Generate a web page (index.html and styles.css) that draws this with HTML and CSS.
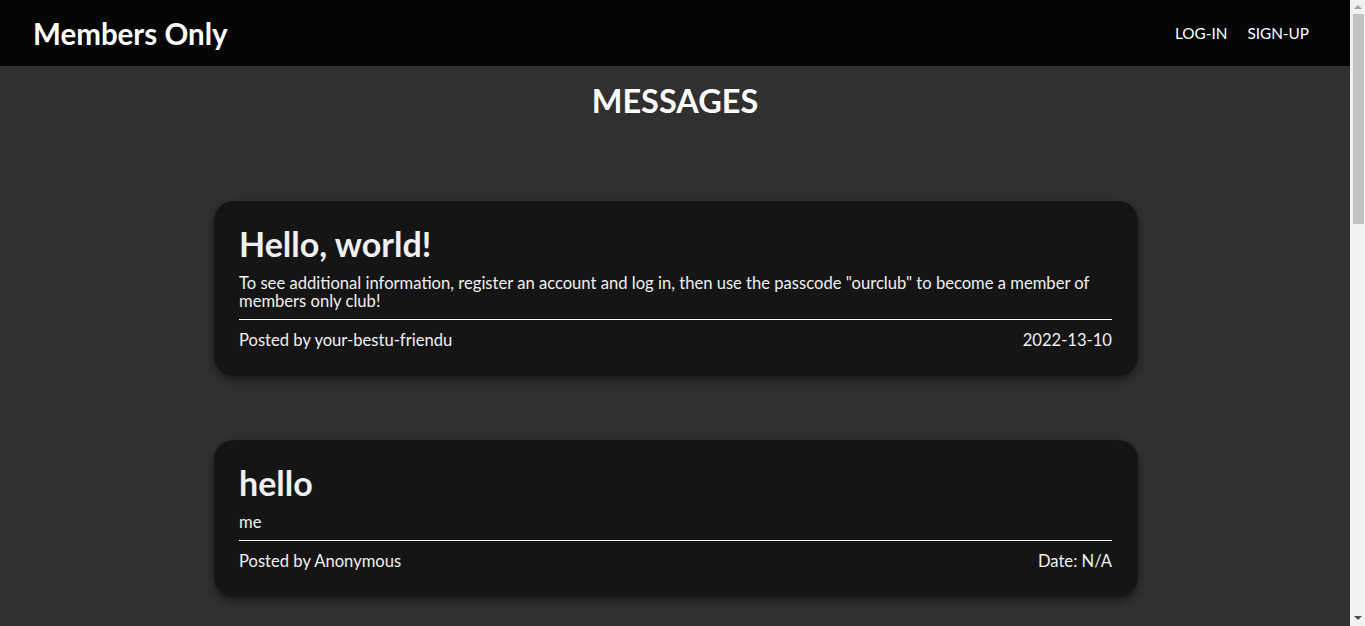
FILE: index.html
```html
<!DOCTYPE html>
<html lang="en">
<head>
<meta charset="utf-8">
<title>Members Only</title>
<link rel="stylesheet" href="styles.css">
</head>
<body>
<div class="page">
  <header class="topbar">
    <a class="brand" href="#">Members Only</a>
    <nav class="nav">
      <a href="#">LOG-IN</a>
      <a href="#">SIGN-UP</a>
    </nav>
  </header>
  <main class="content">
    <h1 class="page-title">MESSAGES</h1>
    <section class="messages">
      <article class="card">
        <h2 class="card-title">Hello, world!</h2>
        <p class="card-text">To see additional information, register an account and log in, then use the passcode "ourclub" to become a member of members only club!</p>
        <div class="card-footer">
          <span>Posted by your-bestu-friendu</span>
          <span>2022-13-10</span>
        </div>
      </article>
      <article class="card">
        <h2 class="card-title">hello</h2>
        <p class="card-text">me</p>
        <div class="card-footer">
          <span>Posted by Anonymous</span>
          <span>Date: N/A</span>
        </div>
      </article>
    </section>
  </main>
</div>
<div class="scrollbar" aria-hidden="true">
  <span class="arrow arrow-up"></span>
  <span class="thumb"></span>
  <span class="arrow arrow-down"></span>
</div>
</body>
</html>
```

FILE: styles.css
```css
* { box-sizing: border-box; }
html, body {
  margin: 0;
  padding: 0;
}
body {
  background: #312f30;
  color: #f0f0f0;
  font-family: Lato, "Noto Sans", sans-serif;
  font-size: 16.6px;
}
.page {
  margin-right: 15px;
}
.topbar {
  height: 66px;
  background: #050505;
  display: flex;
  align-items: center;
  justify-content: space-between;
  padding: 0 41px 0 33px;
}
.brand {
  color: #ffffff;
  text-decoration: none;
  font-weight: 700;
  font-size: 29.5px;
}
.nav {
  display: flex;
  gap: 20px;
}
.nav a {
  color: #ffffff;
  text-decoration: none;
  font-size: 15.3px;
}
.content {
  padding: 16px 0 40px;
}
.page-title {
  margin: 0;
  text-align: center;
  font-size: 32.5px;
  line-height: 38px;
  font-weight: 700;
  color: #ffffff;
}
.messages {
  display: flex;
  flex-direction: column;
  align-items: center;
  gap: 64px;
  margin-top: 81px;
  padding-left: 2px;
}
.card {
  width: 924px;
  background: #151515;
  border-radius: 20px;
  padding: 23px 26px 26px 25px;
  box-shadow: 0 4px 8px rgba(0, 0, 0, 0.45);
}
.card-title {
  margin: 0 0 10px;
  font-size: 34px;
  line-height: 40px;
  font-weight: 700;
  color: #eef0f3;
}
.card-text {
  margin: 0;
  line-height: 18px;
  padding-bottom: 9px;
  border-bottom: 1px solid #ffffff;
}
.card-footer {
  display: flex;
  justify-content: space-between;
  margin-top: 10px;
  line-height: 20px;
}
.scrollbar {
  position: fixed;
  top: 0;
  right: 0;
  width: 15px;
  height: 100%;
  background: #f1f1f1;
  display: flex;
  flex-direction: column;
  align-items: center;
}
.thumb {
  display: block;
  width: 11px;
  margin-left: 1px;
  height: 210px;
  background: #c1c1c1;
}
.arrow {
  display: block;
  width: 0;
  height: 0;
  border-left: 4px solid transparent;
  border-right: 4px solid transparent;
  margin: 5px 0 5px;
}
.arrow-up {
  border-bottom: 4px solid #a3a3a3;
}
.arrow-down {
  border-top: 4px solid #505050;
  margin-top: auto;
  margin-bottom: 6px;
}
```
